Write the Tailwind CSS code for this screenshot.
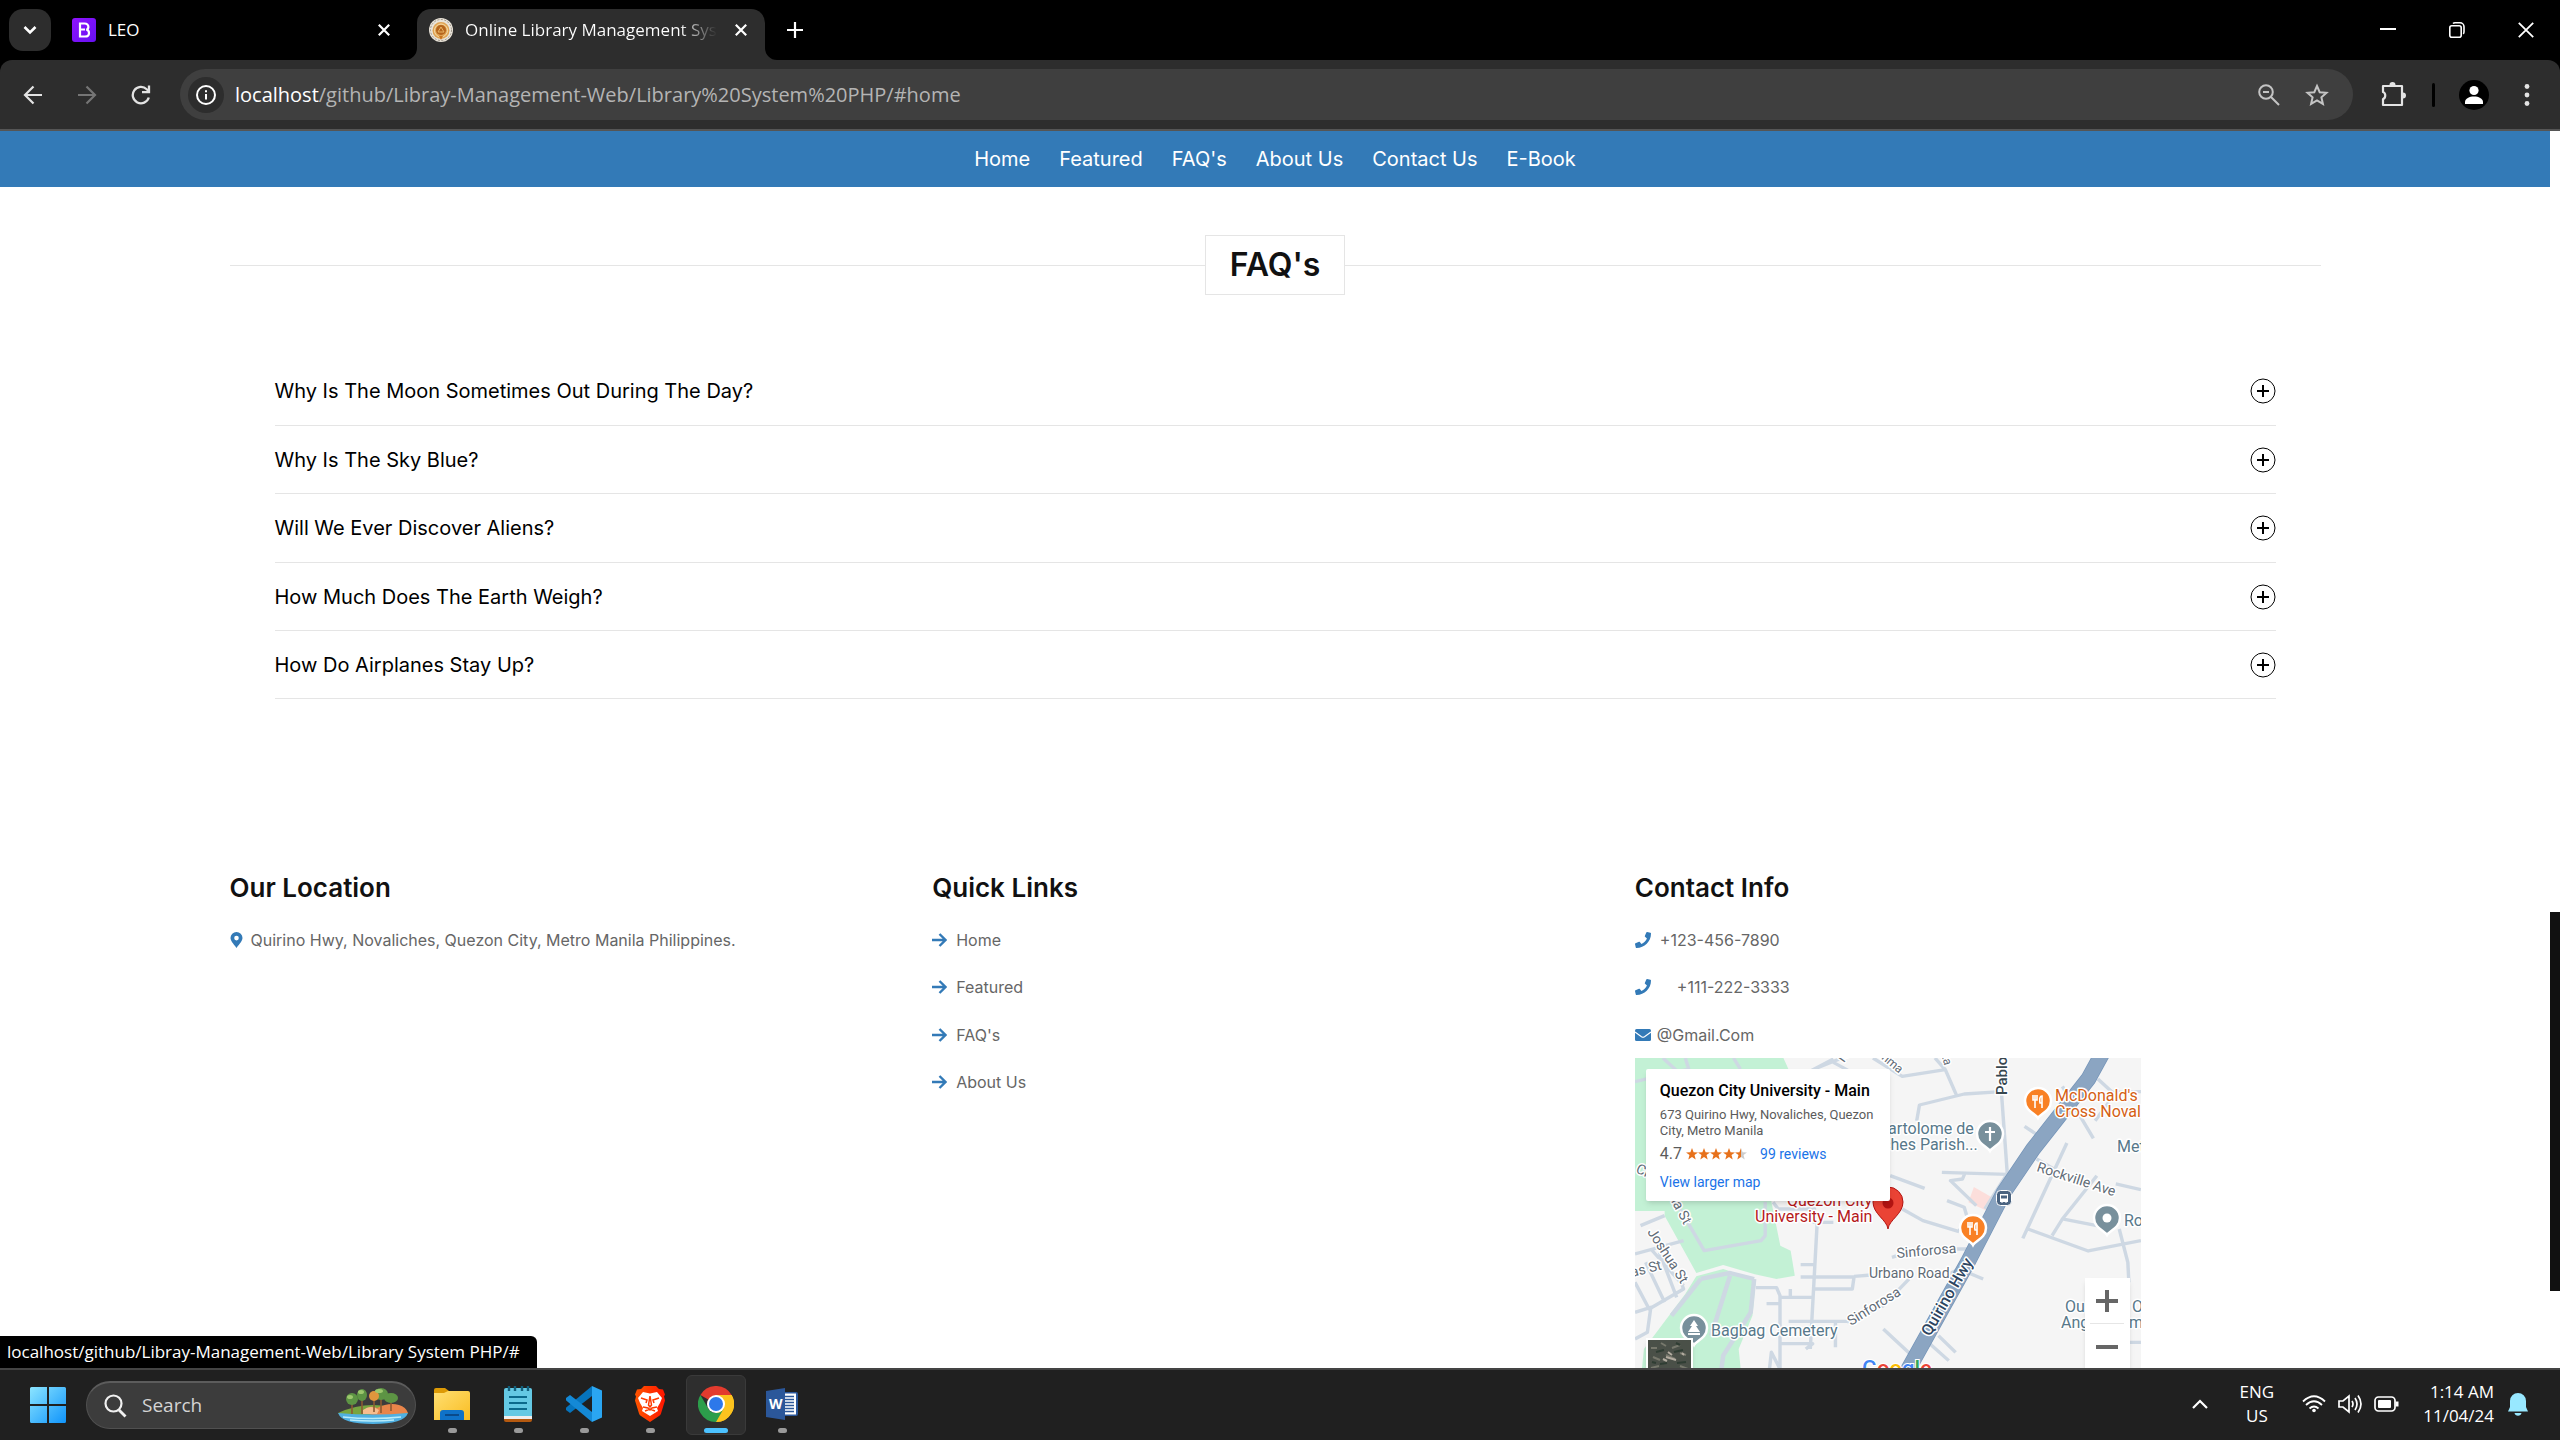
<!DOCTYPE html>
<html lang="en">
<head>
<meta charset="utf-8">
<title>Online Library Management System</title>
<script src="https://cdn.jsdelivr.net/npm/@tailwindcss/browser@4"></script>
</head>
<body class="flex h-screen flex-col overflow-hidden bg-white font-['Open_Sans',sans-serif]">

<!-- Browser tabs -->
<header class="shrink-0 bg-black text-white">
  <div class="flex h-[60px] items-end">
    <div class="flex h-[60px] items-center pl-[9px]">
      <button aria-label="Search tabs" class="flex size-[42px] items-center justify-center rounded-[14px] bg-[#2d2d2d]">
        <svg width="14" height="10" viewBox="0 0 14 10" fill="none" stroke="#fff" stroke-width="2.6"><path d="M1.5 2 7 7.500 12.500 2"/></svg>
      </button>
    </div>
    <div class="flex h-[60px] w-[354px] items-center gap-3 pl-[21px] pr-[9px] text-[17px]">
      <svg width="24" height="24" viewBox="0 0 24 24" class="shrink-0"><defs><linearGradient id="bs" x1="0" x2="1" y1="0" y2="1"><stop stop-color="#9013fe"/><stop offset="1" stop-color="#6610f2"/></linearGradient></defs><rect width="24" height="24" rx="3" fill="url(#bs)"/><path d="M8 5.500v13h5c2.800 0 4-1.600 4-3.600 0-1.700-1-2.900-2.600-3.200 1.300-.4 2-1.500 2-2.800 0-2-1.400-3.400-3.800-3.400zM8 11.500h5" fill="none" stroke="#fff" stroke-width="2.200"/></svg>
      <span class="flex-1">LEO</span>
      <button aria-label="Close tab" class="flex size-6 items-center justify-center"><svg width="12" height="12" viewBox="0 0 12 12" stroke="#fff" stroke-width="2.200"><path d="M.8.8 11.200 11.200M11.200.8.8 11.200"/></svg></button>
    </div>
    <svg width="12" height="12" class="shrink-0" viewBox="0 0 12 12"><path d="M12 0v12H0A12 12 0 0 0 12 0" fill="#2d2d2d"/></svg>
    <div class="flex h-[51px] w-[348px] items-center gap-3 rounded-t-[14px] bg-[#2d2d2d] pb-[9px] pl-3 pr-3 text-[17px]">
      <svg width="24" height="24" viewBox="0 0 24 24" class="shrink-0"><circle cx="12" cy="12" r="12" fill="#e9e3d8"/><circle cx="12" cy="12" r="10.500" fill="none" stroke="#9b9488" stroke-dasharray="2 1.500"/><circle cx="12" cy="12.500" r="8.500" fill="#e0a352"/><circle cx="12" cy="12.500" r="6.500" fill="none" stroke="#f6dfae"/><circle cx="12" cy="12" r="5" fill="#b5651d"/><path d="m12 9 3 5H9z" fill="none" stroke="#e9b565"/><path d="M10 18h4l-2 4z" fill="#c9741f"/></svg>
      <span class="flex-1 overflow-hidden whitespace-nowrap bg-linear-to-r from-white from-85% to-transparent bg-clip-text text-transparent">Online Library Management System</span>
      <button aria-label="Close tab" class="flex size-6 shrink-0 items-center justify-center"><svg width="12" height="12" viewBox="0 0 12 12" stroke="#fff" stroke-width="2.200"><path d="M.8.8 11.200 11.200M11.200.8.8 11.200"/></svg></button>
    </div>
    <svg width="12" height="12" class="shrink-0" viewBox="0 0 12 12"><path d="M0 0v12h12A12 12 0 0 1 0 0" fill="#2d2d2d"/></svg>
    <button aria-label="New tab" class="flex h-[60px] w-9 items-center justify-center"><svg width="16" height="16" viewBox="0 0 16 16" stroke="#fff" stroke-width="2.200"><path d="M8 0v16M0 8h16"/></svg></button>
    <div class="ml-auto flex h-[60px] items-center">
      <button aria-label="Minimize" class="flex h-[60px] w-[69px] items-center justify-center"><svg width="16" height="4" viewBox="0 0 16 4"><path d="M0 0h16v2H0z" fill="#fff"/></svg></button>
      <button aria-label="Restore" class="flex h-[60px] w-[69px] items-center justify-center"><svg width="16" height="16" viewBox="0 0 16 16" fill="none" stroke="#fff" stroke-width="1.600"><rect x=".8" y="3.800" width="11.400" height="11.400" rx="2"/><path d="M4 1.500C4.500 1 5 .8 6 .8h5a4 4 0 0 1 4 4v5c0 1-.2 1.600-.8 2.100"/></svg></button>
      <button aria-label="Close window" class="flex h-[60px] w-[69px] items-center justify-center"><svg width="16" height="16" viewBox="0 0 16 16" stroke="#fff" stroke-width="1.800"><path d="m.8.8 14.400 14.400M15.200.8.800 15.200"/></svg></button>
    </div>
  </div>

  <!-- Address bar -->
  <div class="flex h-[71px] items-center rounded-t-xl border-b-2 border-[#555] bg-[#2d2d2d] py-[2px] pl-[6px]">
    <button aria-label="Back" class="flex size-[54px] items-center justify-center"><svg width="20" height="20" viewBox="0 0 20 20" fill="none" stroke="#e3e3e3" stroke-width="2.200"><path d="M19 10H2.500M10.500 1.500 2 10l8.500 8.500"/></svg></button>
    <button aria-label="Forward" class="flex size-[54px] items-center justify-center"><svg width="20" height="20" viewBox="0 0 20 20" fill="none" stroke="#757575" stroke-width="2.200"><path d="M1 10h16.500M9.500 1.500 18 10l-8.500 8.500"/></svg></button>
    <button aria-label="Reload" class="flex size-[54px] items-center justify-center"><svg width="20" height="20" viewBox="0 0 20 20" fill="none" stroke="#e3e3e3" stroke-width="2.300"><path d="M17.800 12.500A8.200 8.200 0 1 1 15.700 4.200L18 6.500"/><path d="M18 .5V7.200h-7"/></svg></button>
    <div class="ml-3 flex h-[51px] flex-1 items-center rounded-full bg-[#3f3f3f] pl-2">
      <button aria-label="View site information" class="mr-[11px] flex size-9 items-center justify-center rounded-full bg-[#2d2d2d]"><svg width="20" height="20" viewBox="0 0 20 20" fill="none" stroke="#fff" stroke-width="2"><circle cx="10" cy="10" r="9"/><path d="M10 9v5.500M10 5.300v2"/></svg></button>
      <p class="flex-1 text-xl text-[#b4b4b4]"><span class="text-white">localhost</span>/github/Libray-Management-Web/Library%20System%20PHP/#home</p>
      <button aria-label="Zoom" class="flex size-12 items-center justify-center"><svg width="22" height="22" viewBox="0 0 22 22" fill="none" stroke="#c4c4c4" stroke-width="2"><circle cx="8" cy="8" r="6.800"/><path d="m13 13 8 8M5 8h6"/></svg></button>
      <button aria-label="Bookmark this tab" class="mr-3 flex size-12 items-center justify-center"><svg width="24" height="24" viewBox="0 0 24 24" fill="none" stroke="#c4c4c4" stroke-width="2"><path d="m12 3 2.700 6.200 6.800.6-5.100 4.500 1.500 6.600L12 17.400l-5.900 3.500 1.500-6.600-5.100-4.500 6.800-.6z"/></svg></button>
    </div>
    <button aria-label="Extensions" class="ml-4 flex size-12 items-center justify-center"><svg width="26" height="26" viewBox="0 0 26 26"><path d="M3 4h19v19H3v-6c3-1 3-6 0-7z" fill="none" stroke="#e3e3e3" stroke-width="2.200" stroke-linejoin="round"/><path d="M9.500 3a3 3 0 0 1 6 0zM23 10.500a3 3 0 0 1 0 6z" fill="#e3e3e3"/></svg></button>
    <div class="mx-[15px] h-6 w-[3px] rounded bg-black"></div>
    <button aria-label="Profile" class="mx-[9px] flex size-[30px] items-center justify-center rounded-full bg-black"><svg width="30" height="30" viewBox="0 0 30 30" fill="#fff"><circle cx="15" cy="10.500" r="4.600"/><path d="M6 24v-2c0-3.500 4.500-5.500 9-5.500s9 2 9 5.500v2z"/></svg></button>
    <button aria-label="Menu" class="ml-[5px] mr-[9px] flex size-12 items-center justify-center"><svg width="6" height="22" viewBox="0 0 6 22" fill="#e3e3e3"><circle cx="3" cy="2.500" r="2.400"/><circle cx="3" cy="11" r="2.400"/><circle cx="3" cy="19.500" r="2.400"/></svg></button>
  </div>
</header>

<!-- Page -->
<div class="relative flex min-h-0 flex-1">
  <div class="flex-1 overflow-hidden font-['Inter',sans-serif]">
    <nav class="flex h-14 items-center justify-center gap-[29px] bg-[#337ab7] text-xl text-white">
      <a href="#home">Home</a><a href="#featured">Featured</a><a href="#faqs">FAQ's</a><a href="#about">About Us</a><a href="#contact">Contact Us</a><a href="#ebook">E-Book</a>
    </nav>
    <main class="px-[9%]">
      <section id="faqs">
        <div class="flex items-center pt-12">
          <div class="h-px flex-1 bg-black/10"></div>
          <h1 class="flex h-[60px] items-center border border-black/10 px-6 text-[32px] font-semibold text-[#111]">FAQ's</h1>
          <div class="h-px flex-1 bg-black/10"></div>
        </div>
        <div class="mt-[62px] px-[45px] text-xl text-black">
          <button class="flex h-[69px] w-full items-center justify-between border-b border-black/10"><span>Why Is The Moon Sometimes Out During The Day?</span><svg width="26" height="26" viewBox="0 0 26 26" fill="none" stroke="#000"><circle cx="13" cy="13" r="12"/><path d="M13 7v12M7 13h12" stroke-width="2"/></svg></button>
          <button class="flex h-[68px] w-full items-center justify-between border-b border-black/10"><span>Why Is The Sky Blue?</span><svg width="26" height="26" viewBox="0 0 26 26" fill="none" stroke="#000"><circle cx="13" cy="13" r="12"/><path d="M13 7v12M7 13h12" stroke-width="2"/></svg></button>
          <button class="flex h-[69px] w-full items-center justify-between border-b border-black/10"><span>Will We Ever Discover Aliens?</span><svg width="26" height="26" viewBox="0 0 26 26" fill="none" stroke="#000"><circle cx="13" cy="13" r="12"/><path d="M13 7v12M7 13h12" stroke-width="2"/></svg></button>
          <button class="flex h-[68px] w-full items-center justify-between border-b border-black/10"><span>How Much Does The Earth Weigh?</span><svg width="26" height="26" viewBox="0 0 26 26" fill="none" stroke="#000"><circle cx="13" cy="13" r="12"/><path d="M13 7v12M7 13h12" stroke-width="2"/></svg></button>
          <button class="flex h-[68px] w-full items-center justify-between border-b border-black/10"><span>How Do Airplanes Stay Up?</span><svg width="26" height="26" viewBox="0 0 26 26" fill="none" stroke="#000"><circle cx="13" cy="13" r="12"/><path d="M13 7v12M7 13h12" stroke-width="2"/></svg></button>
        </div>
      </section>

      <footer class="mt-[170px] grid grid-cols-3 gap-[17px] text-base text-[#666]">
        <section>
          <h2 class="mb-[11px] flex h-9 items-center text-[26px] font-semibold text-[#111]">Our Location</h2>
          <a href="#location" class="flex h-[47px] items-center gap-2"><svg width="13" height="16" viewBox="0 0 12 16" fill="#337ab7"><path fill-rule="evenodd" d="M6 16C5 14 0 9.500 0 6a6 6 0 0 1 12 0c0 3.500-5 8-6 10M6 3.800a2.300 2.300 0 1 0 0 4.600 2.300 2.300 0 0 0 0-4.600"/></svg>Quirino Hwy, Novaliches, Quezon City, Metro Manila Philippines.</a>
        </section>
        <section>
          <h2 class="mb-[11px] flex h-9 items-center text-[26px] font-semibold text-[#111]">Quick Links</h2>
          <a href="#home" class="flex h-[47px] items-center gap-[9px]"><svg width="15" height="14" viewBox="0 0 15 14" fill="none" stroke="#337ab7" stroke-width="2.400"><path d="M0 7h13M7.500 1l6 6-6 6"/></svg>Home</a>
          <a href="#featured" class="flex h-[48px] items-center gap-[9px]"><svg width="15" height="14" viewBox="0 0 15 14" fill="none" stroke="#337ab7" stroke-width="2.400"><path d="M0 7h13M7.500 1l6 6-6 6"/></svg>Featured</a>
          <a href="#faqs" class="flex h-[47px] items-center gap-[9px]"><svg width="15" height="14" viewBox="0 0 15 14" fill="none" stroke="#337ab7" stroke-width="2.400"><path d="M0 7h13M7.500 1l6 6-6 6"/></svg>FAQ's</a>
          <a href="#about" class="flex h-[48px] items-center gap-[9px]"><svg width="15" height="14" viewBox="0 0 15 14" fill="none" stroke="#337ab7" stroke-width="2.400"><path d="M0 7h13M7.500 1l6 6-6 6"/></svg>About Us</a>
        </section>
        <section>
          <h2 class="mb-[11px] flex h-9 items-center text-[26px] font-semibold text-[#111]">Contact Info</h2>
          <a href="tel:+1234567890" class="flex h-[47px] items-center gap-[9px]"><svg width="16" height="16" viewBox="0 0 512 512" fill="#337ab7"><path d="M493 25 389 1c-11-3-23 3-27 14l-48 112c-4 10-1 22 7 28l61 50c-36 77-99 140-177 177l-50-61c-6-8-18-11-28-7L15 362C4 366-2 378 1 389l24 104c3 11 12 19 24 19 256 0 463-207 463-463 0-12-8-21-19-24"/></svg>+123-456-7890</a>
          <a href="tel:+1112223333" class="flex h-[48px] items-center gap-[26px]"><svg width="16" height="16" viewBox="0 0 512 512" fill="#337ab7"><path d="M493 25 389 1c-11-3-23 3-27 14l-48 112c-4 10-1 22 7 28l61 50c-36 77-99 140-177 177l-50-61c-6-8-18-11-28-7L15 362C4 366-2 378 1 389l24 104c3 11 12 19 24 19 256 0 463-207 463-463 0-12-8-21-19-24"/></svg>+111-222-3333</a>
          <a href="mailto:@gmail.com" class="flex h-[47px] items-center gap-[6px]"><svg width="16" height="12" viewBox="0 0 16 12"><rect width="16" height="12" rx="1.500" fill="#337ab7"/><path d="m0 3 6.500 4.800q1.500 1 3 0L16 3" fill="none" stroke="#fff" stroke-width="1.100"/></svg>@Gmail.Com</a>

          <!-- Embedded map -->
          <div class="relative h-[400px] w-[506px] overflow-hidden bg-[#f5f5f5] font-['Roboto',sans-serif]">
            <svg width="506" height="400" viewBox="0 0 506 400" class="block">
              <g transform="scale(.3444 .3333) translate(-44 -27)">
                <path fill="#c3f1d5" d="M44 27H475L500 85 440 458 466 590 496 605 508 680 455 690 392 676 300 648 222 672 130 500 130 486 44 486Z"/>
                <path fill="#c3f1d5" d="M222 682 300 660 395 692 385 800 345 900 355 1000H60L70 900 190 735Z"/>
                <path fill="#fcdedb" d="M1028 414 1085 448 1062 484 1012 460Z"/>
                <g fill="none" stroke="#ced8e3" stroke-width="10" stroke-linejoin="round">
                  <path d="M44 98 200 60 190 27M350 60 330 27M125 27 165 65M500 95 620 30M565 60 645 27M620 40 700 85"/>
                  <path d="M735 27 820 82 945 62 915 27M945 62 978 140M862 215 870 168 1000 135 1108 128M1108 130 1125 375M935 370 1125 376M1002 372 995 390 960 395 1035 470M785 380 885 418M820 480 880 515 985 548M950 455 1000 475 1010 510 985 545M1125 374 1060 480"/>
                  <path d="M1210 330 1260 360M1440 405 1513 422M1298 282 1170 568M1385 380 1285 510 1385 530 1400 500M1185 540 1360 606 1513 575M1285 510 1255 560M1175 232 1210 256M1285 112 1375 268M1388 90 1430 130 1513 128M1380 215 1420 160M1450 540 1475 640 1478 700M1513 880H1450L1330 980"/>
                  <path d="M160 455 245 605 410 575 422 560V458M60 530 130 500M44 615 185 575M44 700 85 780 185 720 175 690M44 790 90 775 80 850 44 870M75 640 130 760M115 610 165 745M90 600 185 710"/>
                  <path d="M235 690 320 672 390 690M235 690 150 800M320 680 265 860M390 690 380 790 300 920 290 1000" stroke-width="13"/>
                  <path d="M395 716H455L465 740V960L440 910 430 1000M495 720V745M465 745H558M426 764H465M525 647H565M525 684H680L675 720H560M680 682 730 678M573 520 553 900M490 817H660M470 884H560L540 900M626 820V895M660 820 765 770 840 690M445 460 460 480H570M560 520H620"/>
                  <path d="M765 840 840 912M895 880 955 935M925 860 975 910M790 625 805 620M965 600H1020M950 678 985 660 1055 690"/>
                </g>
                <path d="M1408 0 1360 90 1200 300 1115 430 1010 640 830 975" fill="none" stroke="#7494b8" stroke-width="46"/>
                <path d="M1408 0 1360 90 1200 300 1115 430 1010 640 830 975" fill="none" stroke="#8ba5c2" stroke-width="42"/>
              </g>
              <g fill="#5f6b76" stroke="#fff" stroke-width="3" stroke-linejoin="round" paint-order="stroke" font-size="14">
                <text transform="translate(209 5) rotate(-55)">rd</text>
                <text transform="translate(243 -2) rotate(40)" font-size="12">mma</text>
                <text transform="translate(306 -5) rotate(75)" font-size="12">ita</text>
                <text transform="translate(372 37) rotate(-90)" fill="#37474f" font-size="15" font-weight="500">Pablo</text>
                <text transform="translate(401 113) rotate(18)">Rockville Ave</text>
                <text transform="translate(0 114) rotate(25)">Cr</text>
                <text transform="translate(36 143) rotate(62)">ia St</text>
                <text transform="translate(12 174) rotate(57)">Joshua St</text>
                <text transform="translate(-3 219) rotate(-14)">as St</text>
                <text transform="translate(262 200) rotate(-5)">Sinforosa</text>
                <text x="234" y="220">Urbano Road</text>
                <text transform="translate(216 268) rotate(-32)">Sinforosa</text>
                <text transform="translate(295 279) rotate(-60)" fill="#2d4561" font-size="16" font-weight="500">Quirino Hwy</text>
                <g fill="#57788a" font-size="16">
                  <text x="253" y="76">artolome de</text><text x="247" y="92">ches Parish...</text>
                  <text x="482" y="94">Met</text><text x="489" y="168">Ro</text><text x="76" y="278">Bagbag Cemetery</text>
                  <text x="430" y="254">Our</text><text x="426" y="270">Angels</text><text x="497" y="254">O</text><text x="494" y="270">m</text>
                </g>
                <g fill="#d56013" font-size="16"><text x="420" y="43">McDonald's</text><text x="420" y="59">Cross Novaliches</text></g>
                <g fill="#b5191b" font-size="16"><text x="152" y="148">Quezon City</text><text x="120" y="164">University - Main</text></g>
              </g>
              <g stroke="#fff" stroke-width="2.500">
                <path d="M403 60c-2-4-13-7-13-17a13 13 0 0 1 26 0c0 10-11 13-13 17z" fill="#f98125"/>
                <path d="M338 187c-2-4-13-7-13-17a13 13 0 0 1 26 0c0 10-11 13-13 17z" fill="#f98125"/>
                <path d="M355 93c-2-4-13-7-13-17a13 13 0 0 1 26 0c0 10-11 13-13 17z" fill="#78909c"/>
                <path d="M472 177c-2-4-13-7-13-17a13 13 0 0 1 26 0c0 10-11 13-13 17z" fill="#78909c"/>
                <path d="M59 287c-2-4-13-7-13-17a13 13 0 0 1 26 0c0 10-11 13-13 17z" fill="#78909c"/>
              </g>
              <g fill="none" stroke="#fff" stroke-width="1.600"><path d="M398 37v5h4v-5m-2 0v13M407 50V38q-3 0-2 7h2M333 164v5h4v-5m-2 0v13M342 177v-12q-3 0-2 7h2"/><path d="M355 69v14M350 74h10" stroke-width="2.200"/></g>
              <circle cx="472" cy="160" r="4.500" fill="#fff"/>
              <path d="m59 262 4 6h-2l4 6H53l4-6h-2zM53 275h12v2H53z" fill="#fff"/>
              <rect x="361.500" y="132.500" width="15" height="15" rx="4" fill="#4a6380" stroke="#fff"/><path d="M365 136h8v8h-1.500v1h-1v-1h-3v1h-1v-1H365zM366 137.500v3h6v-3z" fill="#fff" fill-rule="evenodd"/>
              <path d="M253 171c-1-9-15-15-15-27a15 15 0 0 1 30 0c0 12-14 18-15 27z" fill="#ea4335" stroke="#b31412"/><circle cx="253" cy="145" r="5.500" fill="#b31412"/>
              <g font-size="22" font-weight="500" stroke="#fff" stroke-width="2" paint-order="stroke"><text x="227" y="318"><tspan fill="#4285f4">G</tspan><tspan fill="#ea4335">o</tspan><tspan fill="#fbbc04">o</tspan><tspan fill="#4285f4">g</tspan><tspan fill="#34a853">l</tspan><tspan fill="#ea4335">e</tspan></text></g>
            </svg>
            <div class="absolute left-[11px] top-[11px] h-[132px] w-[244px] rounded-xs bg-white px-[14px] pt-[12px] shadow-md">
              <h3 class="h-5 whitespace-nowrap text-base leading-5 font-medium text-black">Quezon City University - Main</h3>
              <p class="mt-[6px] whitespace-nowrap text-[13px] leading-4 text-[#5b5b5b]">673 Quirino Hwy, Novaliches, Quezon<br>City, Metro Manila</p>
              <div class="mt-[5px] flex h-5 items-center text-sm"><span class="mr-1 text-base text-[#5b5b5b]">4.7</span>
                <svg width="62" height="12" viewBox="0 0 62 12"><defs><path id="star" d="m6 0 1.600 4.200 4.400.2-3.500 2.700L9.700 11.500 6 9 2.300 11.500l1.200-4.400L0 4.400l4.400-.2z"/><linearGradient id="half"><stop offset=".5" stop-color="#e7711b"/><stop offset=".5" stop-color="#ccc"/></linearGradient></defs><g fill="#e7711b"><use href="#star"/><use href="#star" x="12"/><use href="#star" x="24"/><use href="#star" x="37"/></g><use href="#star" x="49" fill="url(#half)"/></svg>
                <a href="#reviews" class="ml-3 text-[#1a73e8]">99 reviews</a></div>
              <a href="#map" class="mt-2 block text-sm leading-5 text-[#1a73e8]">View larger map</a>
            </div>
            <div class="absolute left-[450px] top-[220px] flex w-[45px] flex-col items-center bg-white shadow-md">
              <button aria-label="Zoom in" class="flex h-[45px] items-center"><svg width="22" height="22" viewBox="0 0 22 22"><path d="M9 0h4v9h9v4h-9v9H9v-9H0V9h9z" fill="#666"/></svg></button>
              <div class="h-px w-[34px] bg-[#e6e6e6]"></div>
              <button aria-label="Zoom out" class="flex h-[45px] items-center"><svg width="22" height="4" viewBox="0 0 22 4"><path d="M0 0h22v4H0z" fill="#666"/></svg></button>
            </div>
            <button aria-label="Satellite view" class="absolute left-[11px] top-[280px] size-[47px] overflow-hidden border-2 border-white shadow-md">
              <svg width="44" height="44" viewBox="0 0 44 44"><path fill="#4a5048" d="M0 0h44v44H0z"/><g fill="none" stroke-width="2"><path stroke="#77786c" d="M3 8h6m4-5 5 3m6 2 8-3M5 17l7 3m6-5 9 4m5-6 6 2M3 28l8-2m8 3 7 3m6-6 8 3"/><path stroke="#2f3d33" d="m8 12 8-2m10 2 9-2M12 24l7-1m10 0 9-1M28 3l4 2M4 22l4 1"/><path stroke="#b3aca0" d="m20 12 4 3m-9 4 4 2m15-8 2 2M18 17l10 3"/></g></svg>
            </button>
          </div>
        </section>
      </footer>
    </main>
  </div>

  <!-- Scrollbar -->
  <div class="flex w-[10px] shrink-0 flex-col bg-white"><div class="flex-[781]"></div><div class="flex-[379] bg-[#111]"></div><div class="flex-[77]"></div></div>

  <!-- Link status bubble -->
  <p class="absolute bottom-0 left-0 flex h-8 w-[537px] items-center whitespace-nowrap rounded-tr-md bg-black pl-[7px] text-[17px] text-white">localhost/github/Libray-Management-Web/Library System PHP/#</p>
</div>

<!-- Taskbar -->
<footer class="flex h-[72px] shrink-0 items-center border-t-2 border-[#444] bg-[#202020] text-white">
  <button aria-label="Start" class="ml-[30px] flex size-9 items-center"><svg width="36" height="36" viewBox="0 0 36 36"><defs><linearGradient id="win" x1="0" y1="0" x2="36" y2="36" gradientUnits="userSpaceOnUse"><stop stop-color="#8ce5ff"/><stop offset="1" stop-color="#0f94fb"/></linearGradient></defs><path fill="url(#win)" d="M0 1.500Q0 0 1.500 0H17v17H0zM19 0h15.500Q36 0 36 1.500V17H19zM0 19h17v17H1.500Q0 36 0 34.500zM19 19h17v15.500q0 1.500-1.500 1.500H19z"/></svg></button>
  <label class="ml-5 flex h-12 w-[330px] items-center rounded-full border border-t-2 border-[#505050] border-t-[#5c5c5c] bg-[#3c3c3c] pl-[17px] pr-[7px]">
    <svg width="23" height="24" viewBox="0 0 23 24" fill="none" stroke="#f0f0f0"><circle cx="9.500" cy="9.500" r="8" stroke-width="2.200"/><path d="m15 16 6.500 6.500" stroke-width="2.800"/></svg>
    <input aria-label="Search" placeholder="Search" class="ml-[15px] min-w-0 flex-1 text-[19px] placeholder:text-[#d4d4d4]">
    <svg width="70" height="36" viewBox="0 0 70 36"><path d="M0 25q35-16 70 0l-4 3H4z" fill="#78a540"/><path d="M25 24q6-8 14-4 12-6 22-3 7 2 9 8l-30 4z" fill="#e8854a"/><path d="M25 22q8-6 16 0l-2 4H25z" fill="#f7bd8e"/><path d="M0 25q35 3 70 0-4 11-35 11T0 25" fill="#4fb0e2"/><path d="M5 29q30 3 58 0M12 32q24 2 44 0" stroke="#b8ecfb" stroke-width="1.500" fill="none"/><path d="M14 8v18M24 6v20M36 10v14M43 5v20M53 9v14" stroke="#8c5a33" stroke-width="1.600"/><g fill="#5d9444"><ellipse cx="14" cy="11" rx="6" ry="6"/><ellipse cx="24" cy="7" rx="5" ry="6"/><ellipse cx="43" cy="6" rx="7" ry="6"/><ellipse cx="53" cy="10" rx="7" ry="5"/></g><ellipse cx="36" cy="8" rx="5" ry="5" fill="#e0963d"/><g fill="#9cc76c"><ellipse cx="12" cy="9" rx="3" ry="2"/><ellipse cx="23" cy="4" rx="3" ry="2"/><ellipse cx="41" cy="3" rx="4" ry="2"/></g></svg>
  </label>
  <div class="ml-[6px] flex gap-[6px]">
    <button aria-label="File Explorer" class="flex h-[60px] w-[60px] flex-col items-center justify-end gap-[6px] pb-[2px]"><svg width="36" height="36" viewBox="0 0 36 36"><defs><linearGradient id="fo" x1="0" y1="0" x2="1" y2="1"><stop stop-color="#ffdf72"/><stop offset="1" stop-color="#f9bd22"/></linearGradient></defs><path d="M0 4q0-2 2-2h9l4 3v6H0z" fill="#dd9a05"/><path d="M0 7h10l4-2h20q2 0 2 2v27H0z" fill="url(#fo)"/><path d="M6 34V27q0-3 3-3h18q3 0 3 3v7z" fill="#0f72c8"/><path d="M11 29h14" stroke="#0a4a8a" stroke-width="2"/></svg><i class="h-[5px] w-[9px] rounded-full bg-[#9a9a9a]"></i></button>
    <button aria-label="Notepad" class="flex h-[60px] w-[60px] flex-col items-center justify-end gap-[6px] pb-[2px]"><svg width="36" height="36" viewBox="0 0 36 36"><path d="M4 31h28v3q0 2-2 2H6q-2 0-2-2z" fill="#b5590f"/><path d="M4 29h28v4H4z" fill="#eee"/><path d="M4 4q0-2 2-2h24q2 0 2 2v26H4z" fill="#64c9e4"/><path d="M9 0v5M15 0v5M22 0v5M28 0v5" stroke="#12607c" stroke-width="2.400"/><path d="M9 11h18M9 17h18M9 23h18" stroke="#0b6a8c" stroke-width="2"/></svg><i class="h-[5px] w-[9px] rounded-full bg-[#9a9a9a]"></i></button>
    <button aria-label="Visual Studio Code" class="flex h-[60px] w-[60px] flex-col items-center justify-end gap-[6px] pb-[2px]"><svg width="36" height="36" viewBox="0 0 36 36"><path d="M26 0 36 4.500v27L26 36z" fill="#2aa6f2"/><path d="M26 0v10L4 27 0 24q-.8-1.500.5-2.800z" fill="#0674bd"/><path d="M26 36V26L4 9 0 12q-.8 1.500.5 2.800z" fill="#1489d6"/></svg><i class="h-[5px] w-[9px] rounded-full bg-[#9a9a9a]"></i></button>
    <button aria-label="Brave" class="flex h-[60px] w-[60px] flex-col items-center justify-end gap-[6px] pb-[2px]"><svg width="36" height="36" viewBox="0 0 36 36"><defs><linearGradient id="br"><stop stop-color="#ff5500"/><stop offset="1" stop-color="#ff1500"/></linearGradient></defs><path d="M12 0h12l3 3 4 .5 2 5-1 2 1 4-4 13q-.5 1.500-2 2.500L18 36l-9-6q-1.500-1-2-2.500L3 14.500l1-4-1-2 2-5L9 3z" fill="url(#br)"/><path d="m11 6 7 1.500L25 6l5 6-2 5-3 5 1 3-8 5-8-5 1-3-3-5-2-5z" fill="#fff"/><path d="m9 12 6 2-1 3m13-5-6 2 1 3M18 10l-1.500 9 1.500 2 1.500-2zM11 21l5 1 2 2 2-2 5-1M13 25l5-2 5 2" fill="none" stroke="#ff3b00" stroke-width="1.500"/></svg><i class="h-[5px] w-[9px] rounded-full bg-[#9a9a9a]"></i></button>
    <button aria-label="Google Chrome" class="flex h-[60px] w-[60px] flex-col items-center justify-end gap-[6px] rounded-md border border-[#3a3a3a] bg-[#2e2e2e] pb-px"><svg width="36" height="36" viewBox="0 0 36 36"><path d="M18 18 2.400 9A18 18 0 0 1 33.600 9z" fill="#e33b2e"/><path d="M18 18 33.600 9A18 18 0 0 1 18 36z" fill="#fcc31e"/><path d="M18 9h15.600A18 18 0 0 1 18 36l7.800-13.500z" fill="#fcc31e"/><path d="M18 36A18 18 0 0 1 2.400 9l7.800 13.500a9 9 0 0 0 15.600 0z" fill="#2c9e4b"/><circle cx="18" cy="18" r="9" fill="#fff"/><circle cx="18" cy="18" r="7" fill="#2d78ea"/></svg><i class="h-[5px] w-6 rounded-full bg-[#4cc2ff]"></i></button>
    <button aria-label="Word" class="flex h-[60px] w-[60px] flex-col items-center justify-end gap-[6px] pb-[2px]"><svg width="36" height="36" viewBox="0 0 36 36"><path d="M18 6h14q2 0 2 2v20q0 2-2 2H18z" fill="#2b579a"/><path d="M20 7.500h12v21H20z" fill="#fff"/><path d="M20 10.500h10M20 13.500h10M20 16.500h10M20 19.500h10M20 22.500h10M20 25.500h10" stroke="#2b579a" stroke-width="1.400"/><path d="M2 5 21 2v32L2 31z" fill="#2b579a"/><text x="5" y="23" font-family="Open Sans, sans-serif" font-size="14" font-weight="700" fill="#fff">W</text></svg><i class="h-[5px] w-[9px] rounded-full bg-[#9a9a9a]"></i></button>
  </div>
  <div class="ml-auto flex items-center pr-8 pb-[2px] text-[17px] leading-6">
    <button aria-label="Show hidden icons" class="mr-8"><svg width="16" height="10" viewBox="0 0 16 10" fill="none" stroke="#fff" stroke-width="2.200"><path d="m1 9 7-7 7 7"/></svg></button>
    <button class="mr-7 text-center">ENG<br>US</button>
    <div class="flex items-center gap-3">
      <svg width="24" height="18" viewBox="0 0 24 18" fill="none" stroke="#fff" stroke-width="1.800"><path d="M1 6.500q11-10.500 22 0M4 10q8-7.500 16 0M7.500 13.500q4.500-4 9 0"/><circle cx="12" cy="15.500" r="1.800" fill="#fff" stroke="none"/></svg>
      <svg width="24" height="20" viewBox="0 0 24 20" fill="none" stroke="#fff" stroke-width="1.700"><path d="M1 7v6h4l6 5V2L5 7zM14 7q2 3 0 6M17 4q4 6 0 12M20 1.500q6 8.500 0 17"/></svg>
      <svg width="25" height="16" viewBox="0 0 25 16" fill="none" stroke="#fff" stroke-width="1.700"><rect x="1" y="1" width="20" height="14" rx="3.500"/><rect x="4" y="4" width="13" height="8" rx="1" fill="#fff" stroke="none"/><path d="M23 5.500v5" stroke-width="3"/></svg>
    </div>
    <button class="ml-6 text-right">1:14 AM<br>11/04/24</button>
    <button aria-label="Notifications" class="ml-[14px]"><svg width="20" height="23" viewBox="0 0 20 23" fill="#98e8ff"><path d="M10 0a8 8 0 0 0-8 8v6l-2 4.500h20L18 14V8a8 8 0 0 0-8-8M6.500 20h7a3.600 3.600 0 0 1-7 0"/></svg></button>
  </div>
</footer>
</body>
</html>
